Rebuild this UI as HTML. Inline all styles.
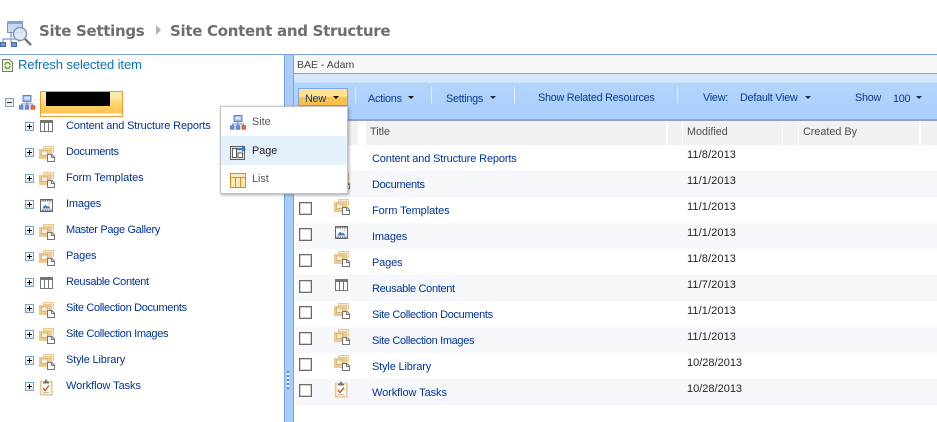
<!DOCTYPE html>
<html>
<head>
<meta charset="utf-8">
<style>
html,body{margin:0;padding:0;width:937px;height:422px;overflow:hidden;background:#fff}
body{position:relative;font-family:"Liberation Sans",sans-serif;font-size:11px;color:#333}
.a{position:absolute}
.t{position:absolute;white-space:nowrap;line-height:14px;margin-top:1px}
.l{color:#003399;font-size:11px;letter-spacing:-.16px}
.l.n{letter-spacing:-.33px}
.l.w{letter-spacing:-.08px}
.d{color:#222;letter-spacing:.1px}
.b{color:#0a3a8c;font-size:10.8px;letter-spacing:-.24px}
svg{position:absolute;overflow:visible}
.ck{position:absolute;left:299px;width:11px;height:11px;border:1px solid #6a6a6a;background:#fff;box-shadow:inset 0 0 0 .5px #aaa}
.ex{position:absolute;left:25px;width:7px;height:7px;border:1px solid #7fa3c7;background:linear-gradient(#fff,#dfe6ee)}
.ex:before{content:"";position:absolute;left:1px;top:3px;width:5px;height:1px;background:#000}
.ex:after{content:"";position:absolute;left:3px;top:1px;width:1px;height:5px;background:#000}
.sep{position:absolute;top:87px;width:1px;height:17px;background:#e4f0fe}
.arr{position:absolute;width:0;height:0;border-left:3px solid transparent;border-right:3px solid transparent;border-top:3px solid #1a2a50}
.hd{position:absolute;top:121px;height:24px;background:#f1f1f1}
</style>
</head>
<body>
<svg width="0" height="0" style="position:absolute">
<defs>
<g id="folder">
<path d="M4.500 3V.5h10v7" fill="#f7ead2" stroke="#e9c78f"/>
<path d="M0 13V3h4.500l1-1H13v11z" fill="#ebc98f"/>
<rect x="2.500" y="5" width="6" height="4.500" fill="#f9ecd4" stroke="#d3ad72" stroke-width=".8"/>
<path d="M8.500 8.500h4.500l2.500 2.500v4.500h-7z" fill="#fff" stroke="#757575"/>
<path d="M12.500 8.500v3h3" fill="none" stroke="#757575"/>
</g>
<g id="table">
<rect x=".5" y=".5" width="12" height="11" fill="#fff" stroke="#757575"/>
<rect x="0" y="0" width="13" height="3" fill="#757575"/>
<path d="M4.500 3v8.500M8.500 3v8.500" stroke="#757575" fill="none"/>
</g>
<g id="image">
<rect x=".5" y=".5" width="12" height="12" fill="#fff" stroke="#666"/>
<path d="M0 1.500h13M0 11.500h13" stroke="#666" stroke-width="2" stroke-dasharray="1.500 .8" fill="none"/>
<path d="M2 9.500l3-4 2 2 1-1 3 3z" fill="#3f7fc4"/>
<rect x="8.500" y="3.500" width="2" height="2" fill="#e8c283"/>
</g>
<g id="tree" transform="scale(.89)">
<rect x="4.500" y=".5" width="9" height="7" fill="#9db8e8" stroke="#4f78c8"/>
<rect x="6" y="2" width="6" height="3" fill="#dfe9fb"/>
<path d="M9 8v2M3 12v-2h12v2M9 10v2" stroke="#4f78c8" fill="none"/>
<rect x=".5" y="12" width="4" height="4" fill="#6a97e2" stroke="#4f78c8"/>
<rect x="7" y="12" width="4" height="4" fill="#6a97e2" stroke="#4f78c8"/>
<rect x="13.500" y="12" width="4" height="4" fill="#ee6a3c" stroke="#e0502a"/>
</g>
<g id="task">
<rect x=".7" y="2.700" width="11" height="13" fill="#fff" stroke="#ebc98f" stroke-width="1.800"/>
<path d="M4 3l2-3 2 3z" fill="#757575"/>
<rect x="3" y="3" width="6" height="1.500" fill="#757575"/>
<path d="M3 9l2 2.500 4-5" stroke="#d9432a" stroke-width="1.400" fill="none"/>
<path d="M3 13.500h6" stroke="#bbb" fill="none"/>
</g>
</defs>
</svg>

<!-- Title -->
<svg style="left:0;top:20px" width="34" height="28" viewBox="0 0 34 28">
<rect x="7.500" y="1.500" width="15" height="11" fill="#c7d8f2" stroke="#6f93cf"/>
<rect x="7" y="1" width="16" height="3" fill="#7fa2dc"/>
<path d="M11 13v5M3 22v-3h16v3M11 19v3" stroke="#5d83c4" fill="none"/>
<rect x=".5" y="22.500" width="5" height="4" fill="#6f96d8" stroke="#45699f"/>
<rect x="11.500" y="22.500" width="5" height="4" fill="#6f96d8" stroke="#45699f"/>
<circle cx="20" cy="14" r="6.500" fill="#dce8f6" fill-opacity=".9" stroke="#8a97a5" stroke-width="1.500"/>
<path d="M25 19l6 6" stroke="#777" stroke-width="2.500"/>
</svg>
<div class="t" style="margin:0;left:39px;top:22px;font:bold 15px/18px 'DejaVu Sans',sans-serif;color:#6e6e6e;letter-spacing:-.3px">Site Settings</div>
<div class="a" style="left:156px;top:25px;border-left:5px solid #b4b4b4;border-top:5px solid transparent;border-bottom:5px solid transparent"></div>
<div class="t" style="margin:0;left:170px;top:22px;font:bold 15px/18px 'DejaVu Sans',sans-serif;color:#6e6e6e;letter-spacing:-.3px">Site Content and Structure</div>

<div class="a" style="left:0;top:54px;width:937px;height:1px;background:#7aa5df"></div>

<!-- left pane -->
<svg style="left:2px;top:58px" width="11" height="15" viewBox="0 0 11 15">
<path d="M.5 1.500h7l3 3v9H.5z" fill="#f6f3dc" stroke="#777"/>
<path d="M3 7a2.500 2.500 0 0 1 5 0M8 8a2.500 2.500 0 0 1-5 0" stroke="#4d9a28" stroke-width="1.300" fill="none"/>
</svg>
<div class="t" style="left:18px;top:57px;font-size:13px;color:#0a6fc0;letter-spacing:-.09px">Refresh selected item</div>

<div class="a" style="left:5px;top:98px;width:7px;height:7px;border:1px solid #7fa3c7;background:#e9eef3"></div>
<div class="a" style="left:7px;top:102px;width:5px;height:1px;background:#333"></div>
<svg style="left:19px;top:95px" width="16" height="15"><use href="#tree"/></svg>
<div class="a" style="left:40px;top:91px;width:81px;height:24px;border:1px solid #f29b36;background:linear-gradient(#ffe9a6 0,#ffe9a6 25%,#ffd676 40%,#fdc24e 90%,#fff 90%)"></div>
<div class="a" style="left:46px;top:92px;width:64px;height:14px;background:#000"></div>

<div class="ex" style="top:122px"></div><svg style="left:40px;top:120px" width="13" height="12"><use href="#table"/></svg><div class="t l" style="left:66px;top:118px">Content and Structure Reports</div>
<div class="ex" style="top:148px"></div><svg style="left:39px;top:146px" width="16" height="16"><use href="#folder"/></svg><div class="t l n" style="left:66px;top:144px">Documents</div>
<div class="ex" style="top:174px"></div><svg style="left:39px;top:172px" width="16" height="16"><use href="#folder"/></svg><div class="t l w" style="left:66px;top:170px">Form Templates</div>
<div class="ex" style="top:200px"></div><svg style="left:40px;top:199px" width="13" height="13"><use href="#image"/></svg><div class="t l" style="left:66px;top:196px">Images</div>
<div class="ex" style="top:226px"></div><svg style="left:39px;top:224px" width="16" height="16"><use href="#folder"/></svg><div class="t l n" style="left:66px;top:222px">Master Page Gallery</div>
<div class="ex" style="top:252px"></div><svg style="left:39px;top:250px" width="16" height="16"><use href="#folder"/></svg><div class="t l" style="left:66px;top:248px">Pages</div>
<div class="ex" style="top:278px"></div><svg style="left:40px;top:277px" width="13" height="12"><use href="#table"/></svg><div class="t l n" style="left:66px;top:274px">Reusable Content</div>
<div class="ex" style="top:304px"></div><svg style="left:39px;top:302px" width="16" height="16"><use href="#folder"/></svg><div class="t l n" style="left:66px;top:300px">Site Collection Documents</div>
<div class="ex" style="top:330px"></div><svg style="left:39px;top:328px" width="16" height="16"><use href="#folder"/></svg><div class="t l n" style="left:66px;top:326px">Site Collection Images</div>
<div class="ex" style="top:356px"></div><svg style="left:39px;top:354px" width="16" height="16"><use href="#folder"/></svg><div class="t l" style="left:66px;top:352px">Style Library</div>
<div class="ex" style="top:382px"></div><svg style="left:40px;top:379px" width="12" height="16"><use href="#task"/></svg><div class="t l w" style="left:66px;top:378px">Workflow Tasks</div>

<!-- splitter -->
<div class="a" style="left:284px;top:55px;width:8px;height:367px;background:#a9cdfb;border-left:1px solid #7aa5df;border-right:1px solid #7aa5df"></div>
<div class="a" style="left:287px;top:371px;width:2px;height:18px;background:repeating-linear-gradient(#5a7fb8 0 2px,#fff 2px 4px)"></div>

<!-- breadcrumb strip -->
<div class="a" style="left:294px;top:55px;width:643px;height:18px;background:#f8f8f8"></div>
<div class="t" style="left:297px;top:57px;font-size:10.500px;color:#444">BAE - Adam</div>
<div class="a" style="left:294px;top:73px;width:643px;height:1px;background:#7aa5df"></div>

<!-- toolbar -->
<div class="a" style="left:294px;top:74px;width:643px;height:45px;background:linear-gradient(#d6e8fe 0,#d6e8fe 8px,#b3d4fc 9px,#aacffb 100%)"></div>
<div class="a" style="left:294px;top:119px;width:643px;height:2px;background:#8aa5c8"></div>
<div class="a" style="left:298px;top:88px;width:48px;height:16px;border:1px solid #7aa5df;background:linear-gradient(#ffe28f 0,#ffe28f 45%,#fdc24e 55%,#fdc24e 100%)"></div>
<div class="t b" style="left:305px;top:91px">New</div><div class="arr" style="left:333px;top:96px;border-top-color:#111"></div>
<div class="sep" style="left:355px"></div>
<div class="t b" style="left:368px;top:91px">Actions</div><div class="arr" style="left:408px;top:96px;border-top-color:#111"></div>
<div class="sep" style="left:431px"></div>
<div class="t b" style="left:446px;top:91px">Settings</div><div class="arr" style="left:490px;top:96px"></div>
<div class="sep" style="left:514px"></div>
<div class="t b" style="left:538px;top:90px">Show Related Resources</div>
<div class="sep" style="left:677px"></div>
<div class="t b" style="left:703px;top:90px">View:</div>
<div class="t b" style="left:740px;top:90px">Default View</div><div class="arr" style="left:805px;top:96px"></div>
<div class="t b" style="left:855px;top:90px">Show</div>
<div class="t b" style="left:893px;top:91px">100</div><div class="arr" style="left:916px;top:96px"></div>

<!-- header -->
<div class="hd" style="left:294px;width:64px"></div>
<div class="hd" style="left:366px;width:300px"></div>
<div class="hd" style="left:668px;width:14px"></div>
<div class="hd" style="left:683px;width:99px"></div>
<div class="hd" style="left:783px;width:15px"></div>
<div class="hd" style="left:799px;width:120px"></div>
<div class="hd" style="left:921px;width:16px"></div>
<div class="t" style="left:370px;top:124px;font-size:10.800px;color:#4c4c4c">Title</div>
<div class="t" style="left:687px;top:124px;font-size:10.800px;color:#4c4c4c">Modified</div>
<div class="t" style="left:803px;top:124px;font-size:10.800px;color:#4c4c4c">Created By</div>

<!-- rows -->
<div class="a" style="left:296px;top:171px;width:641px;height:26px;background:#f7f8fc"></div>
<div class="a" style="left:296px;top:223px;width:641px;height:26px;background:#f7f8fc"></div>
<div class="a" style="left:296px;top:275px;width:641px;height:26px;background:#f7f8fc"></div>
<div class="a" style="left:296px;top:327px;width:641px;height:26px;background:#f7f8fc"></div>
<div class="a" style="left:296px;top:379px;width:641px;height:26px;background:#f7f8fc"></div>

<div class="t l" style="left:372px;top:151px">Content and Structure Reports</div><div class="t d" style="left:687px;top:147px">11/8/2013</div>
<svg style="left:334px;top:173px" width="16" height="16"><use href="#folder"/></svg>
<div class="t l n" style="left:372px;top:177px">Documents</div><div class="t d" style="left:687px;top:173px">11/1/2013</div>

<div class="ck" style="top:202px"></div><svg style="left:334px;top:199px" width="16" height="16"><use href="#folder"/></svg><div class="t l w" style="left:372px;top:203px">Form Templates</div><div class="t d" style="left:687px;top:199px">11/1/2013</div>
<div class="ck" style="top:228px"></div><svg style="left:335px;top:226px" width="13" height="13"><use href="#image"/></svg><div class="t l" style="left:372px;top:229px">Images</div><div class="t d" style="left:687px;top:225px">11/1/2013</div>
<div class="ck" style="top:254px"></div><svg style="left:334px;top:251px" width="16" height="16"><use href="#folder"/></svg><div class="t l" style="left:372px;top:255px">Pages</div><div class="t d" style="left:687px;top:251px">11/8/2013</div>
<div class="ck" style="top:280px"></div><svg style="left:335px;top:279px" width="13" height="12"><use href="#table"/></svg><div class="t l n" style="left:372px;top:281px">Reusable Content</div><div class="t d" style="left:687px;top:277px">11/7/2013</div>
<div class="ck" style="top:306px"></div><svg style="left:334px;top:303px" width="16" height="16"><use href="#folder"/></svg><div class="t l n" style="left:372px;top:307px">Site Collection Documents</div><div class="t d" style="left:687px;top:303px">11/1/2013</div>
<div class="ck" style="top:332px"></div><svg style="left:334px;top:329px" width="16" height="16"><use href="#folder"/></svg><div class="t l n" style="left:372px;top:333px">Site Collection Images</div><div class="t d" style="left:687px;top:329px">11/1/2013</div>
<div class="ck" style="top:358px"></div><svg style="left:334px;top:355px" width="16" height="16"><use href="#folder"/></svg><div class="t l" style="left:372px;top:359px">Style Library</div><div class="t d" style="left:687px;top:355px;letter-spacing:0">10/28/2013</div>
<div class="ck" style="top:384px"></div><svg style="left:335px;top:381px" width="12" height="16"><use href="#task"/></svg><div class="t l w" style="left:372px;top:385px">Workflow Tasks</div><div class="t d" style="left:687px;top:381px;letter-spacing:0">10/28/2013</div>

<!-- menu -->
<div class="a" style="left:220px;top:106px;width:126px;height:86px;background:#fff;border:1px solid #c4c4c4;box-shadow:1px 1px 3px rgba(0,0,0,.35)"></div>
<div class="a" style="left:221px;top:136px;width:126px;height:29px;background:#e4f1fb"></div>
<svg style="left:230px;top:115px" width="16" height="15"><use href="#tree"/></svg>
<div class="t" style="margin:0;left:252px;top:115px;font-size:10.800px;color:#555">Site</div>
<svg style="left:230px;top:145px" width="16" height="15" viewBox="0 0 16 15">
<rect x=".5" y="1.500" width="14" height="13" fill="#dfe3ea" stroke="#5d5d5d"/>
<rect x="2.500" y="3.500" width="4" height="9" fill="#fff" stroke="#5d5d5d"/>
<rect x="8" y="8" width="4.500" height="4.500" fill="#fff" stroke="#5d5d5d"/>
<path d="M7 3h5V0l4 4-4 3V5H7z" fill="#3c78d0"/>
</svg>
<div class="t" style="margin:0;left:252px;top:144px;font-size:10.800px;color:#222">Page</div>
<svg style="left:230px;top:173px" width="16" height="16" viewBox="0 0 16 16">
<rect x=".5" y=".5" width="15" height="14" fill="#fdeac0" stroke="#e88a0c"/>
<path d="M0 4.500h16M5.500 4.500v10M10.500 4.500v10" stroke="#e88a0c" fill="none"/>
</svg>
<div class="t" style="margin:0;left:252px;top:172px;font-size:10.800px;color:#555">List</div>
</body>
</html>
